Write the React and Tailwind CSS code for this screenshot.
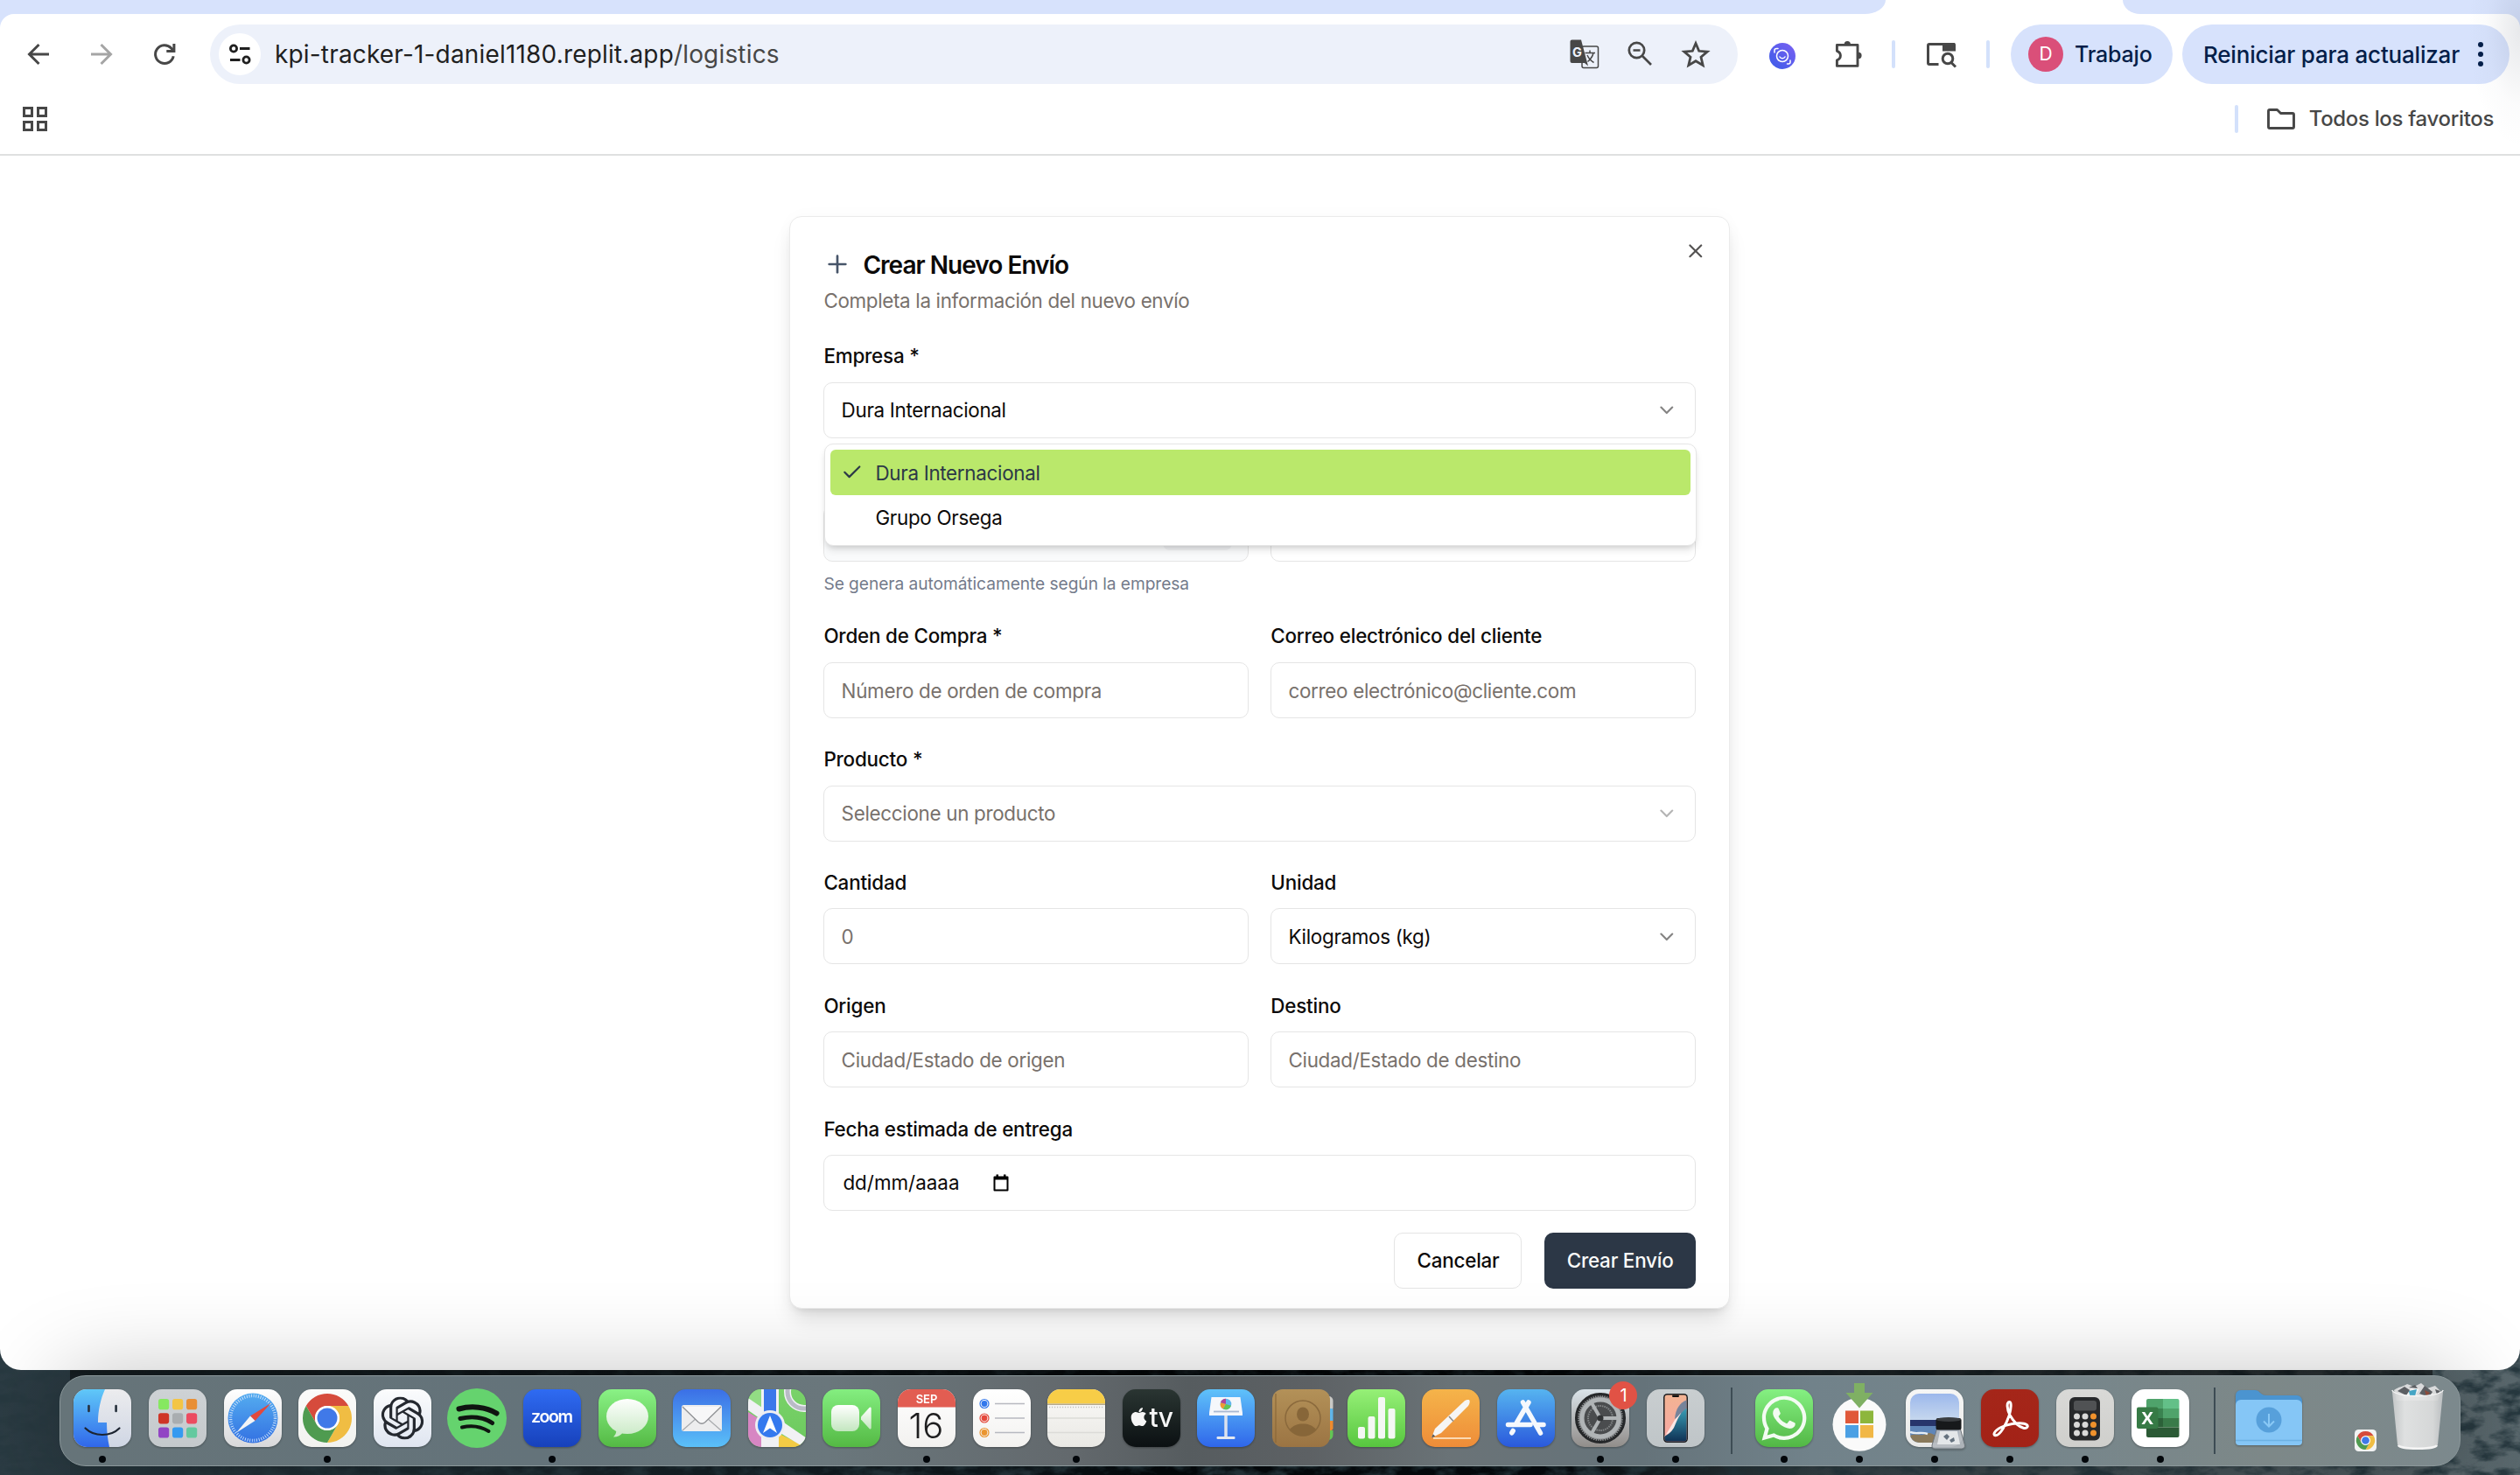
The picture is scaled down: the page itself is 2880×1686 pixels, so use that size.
import { ChevronDown, Check, Plus, X } from "lucide-react";
import { FaApple, FaWhatsapp } from "react-icons/fa";
import { SiOpenai } from "react-icons/si";

/* ---------- Browser chrome ---------- */

function TabStrip() {
  return (
    <div className="flex h-4 justify-between bg-white">
      <div className="w-[2155px] bg-[#d7e2fc] [border-bottom-right-radius:24px_16px]" />
      <div className="w-[454px] bg-[#d7e2fc] [border-bottom-left-radius:20px_16px]" />
    </div>
  );
}

const stroke = { fill: "none", stroke: "currentColor", strokeLinecap: "butt", strokeLinejoin: "miter" };

function ArrowLeft({ className }) {
  return (
    <svg viewBox="0 0 36 36" className={className} {...stroke} strokeWidth="3">
      <path d="M30 18H8M18.5 7 7.5 18l11 11" />
    </svg>
  );
}

function Reload({ className }) {
  return (
    <svg viewBox="0 0 36 36" className={className} {...stroke} strokeWidth="3">
      <path d="M28.2 20.2A10.4 10.4 0 1 1 25.6 11l3 3.2" />
      <path d="M28.9 6v8.6h-8.6" />
    </svg>
  );
}

function Tune() {
  return (
    <svg viewBox="0 0 28 28" className="size-7" {...stroke} strokeWidth="2.8">
      <circle cx="7" cy="7.5" r="3.6" />
      <path d="M14 7.5h11.5M3 20.5h11.5" />
      <circle cx="21.5" cy="20.5" r="3.6" />
    </svg>
  );
}

function Translate() {
  return (
    <svg viewBox="0 0 34 34" className="size-[34px]">
      <rect x="14" y="8" width="18.5" height="24.5" rx="2" fill="#edf1fa" stroke="#474747" strokeWidth="1.5" />
      <path d="M2.500.5H13L21 30.500 17 27H2.500a2 2 0 0 1-2-2V2.500a2 2 0 0 1 2-2z" fill="#474747" />
      <text x="3" y="20" fontSize="14.500" fontWeight="700" fill="#edf1fa" className="font-['Inter']">G</text>
      <path d="M17.500 15.500h11.500M23 12.500v3M27 15.500c-1 4.500-3.500 7.500-6.500 10M20 18c1.500 3.500 4 6.500 7.500 8.500" fill="none" stroke="#474747" strokeWidth="1.500" />
    </svg>
  );
}

function ZoomOut() {
  return (
    <svg viewBox="0 0 32 32" className="size-8 text-[#474747]" {...stroke} strokeWidth="2.700">
      <circle cx="12.500" cy="11.500" r="8.700" />
      <path d="m18.500 17.500 10.500 10.500M8.500 11.500h8" />
    </svg>
  );
}

function Star() {
  return (
    <svg viewBox="0 0 36 36" className="size-9 text-[#474747]" {...stroke} strokeWidth="2.800">
      <path d="m18 5.500 3.700 8.800 9.500.8-7.200 6.200 2.200 9.300L18 25.700l-8.200 4.900 2.200-9.300-7.200-6.200 9.500-.8z" />
    </svg>
  );
}

function FaceScan() {
  return (
    <svg viewBox="0 0 30 30" className="mt-1 size-[30px]">
      <defs>
        <linearGradient id="scan" x1="0" y1="1" x2="1" y2="0">
          <stop offset="0" stopColor="#3a5be8" />
          <stop offset="1" stopColor="#7b61f2" />
        </linearGradient>
      </defs>
      <circle cx="15" cy="15" r="15" fill="url(#scan)" />
      <g fill="none" stroke="#fff" strokeWidth="1.500" strokeLinecap="round">
        <circle cx="15" cy="15" r="6.500" />
        <path d="M12 16c1.200 2.200 4.800 2.200 6 0M6 11V8.500C6 7.500 7 6.500 8.500 6.500H10M24 20v2c0 1-1 2-2 2h-1.500" />
      </g>
    </svg>
  );
}

function Puzzle() {
  return (
    <svg viewBox="0 0 36 36" className="size-9 text-[#474747]" {...stroke} strokeWidth="2.900" strokeLinejoin="round">
      <path d="M5.400 7.400H29V31.400H5.400v-6.500c2.800-1 4-3 4-5.300s-1.200-4.300-4-5.300z" />
      <path d="M13.700 6.500a3.600 3.600 0 0 1 7.200 0zM30 15.800a3.600 3.600 0 0 1 0 7.200z" fill="currentColor" stroke="none" />
    </svg>
  );
}

function TabSearch() {
  return (
    <svg viewBox="0 0 36 32" className="h-8 w-9 text-[#474747]" {...stroke} strokeWidth="3">
      <path d="M14.500 27.500H4a1.500 1.500 0 0 1-1.500-1.500V6A1.500 1.500 0 0 1 4 4.500h29" />
      <path d="M19 3h13a2 2 0 0 1 2 2v7.500H19z" fill="currentColor" stroke="none" />
      <circle cx="25" cy="21" r="5.800" />
      <path d="m29 25.500 5 5" />
    </svg>
  );
}

function Divider({ className }) {
  return <div className={"h-8 w-1 rounded-full bg-[#d3e1fb] " + className} />;
}

function Toolbar() {
  return (
    <div className="flex h-[92px] items-start pt-3">
      <div className="flex h-[68px] w-[240px] items-center pl-[26px] text-[#474747]">
        <ArrowLeft className="size-9" />
        <ArrowLeft className="ml-9 size-9 rotate-180 text-[#a5a5a5]" />
        <Reload className="ml-9 size-9" />
      </div>
      <div className="flex h-[68px] w-[1746px] items-center rounded-full bg-[#edf1fa] pl-[10px]">
        <div className="flex size-12 items-center justify-center rounded-full bg-white text-[#1f1f1f]">
          <Tune />
        </div>
        <div className="ml-4 text-[28px] leading-9 tracking-[0.170px] whitespace-nowrap text-[#1f1f1f]">
          kpi-tracker-1-daniel1180.replit.app<span className="text-[#474747]">/logistics</span>
        </div>
        <div className="mr-[30px] ml-auto flex items-center">
          <Translate />
          <div className="ml-[30px]"><ZoomOut /></div>
          <div className="ml-[30px]"><Star /></div>
        </div>
      </div>
      <div className="flex h-[68px] flex-1 items-center pl-9">
        <FaceScan />
        <div className="ml-[42px]"><Puzzle /></div>
        <Divider className="ml-[32px]" />
        <div className="ml-[35px]"><TabSearch /></div>
        <Divider className="ml-[33px]" />
        <div className="ml-6 flex h-[68px] w-[185px] items-center rounded-full bg-[#d7e2fc] pl-5 text-[#041e49]">
          <div className="flex size-10 items-center justify-center rounded-full bg-[#da4f79] text-[21px] text-white">D</div>
          <span className="mt-px ml-[13px] text-[25px] font-medium tracking-[-0.200px]">Trabajo</span>
        </div>
        <div className="ml-[11px] flex h-[68px] w-[374px] items-center rounded-full bg-[#d7e2fc] pl-6 text-[#041e49]">
          <span className="text-[26px] font-medium tracking-[-0.200px] whitespace-nowrap">Reiniciar para actualizar</span>
          <div className="ml-[21px] flex flex-col gap-[5px]">
            <i className="size-[6px] rounded-full bg-current" />
            <i className="size-[6px] rounded-full bg-current" />
            <i className="size-[6px] rounded-full bg-current" />
          </div>
        </div>
      </div>
    </div>
  );
}

function BookmarksBar() {
  return (
    <div className="flex h-[70px] items-center border-b-2 border-[#dfe0e0] pr-[30px] pl-[26px] text-[#474747]">
      <div className="mb-3 grid grid-cols-2 gap-1">
        <i className="size-3 border-[3px] border-current" />
        <i className="size-3 border-[3px] border-current" />
        <i className="size-3 border-[3px] border-current" />
        <i className="size-3 border-[3px] border-current" />
      </div>
      <div className="mb-3 ml-auto flex items-center">
        <Divider className="mr-[32px]" />
        <svg viewBox="0 0 34 26" className="h-[26px] w-[34px]" fill="none" stroke="currentColor" strokeWidth="2.900" strokeLinejoin="round">
          <path d="M2.500 4a1.500 1.500 0 0 1 1.500-1.500h8.500l4 4H30A1.500 1.500 0 0 1 31.500 8v14A1.500 1.500 0 0 1 30 23.500H4A1.500 1.500 0 0 1 2.500 22z" />
        </svg>
        <span className="ml-[15px] text-[24px] font-medium tracking-[-0.330px] whitespace-nowrap">Todos los favoritos</span>
      </div>
    </div>
  );
}

/* ---------- Form dialog ---------- */

function Field({ label, children, className = "" }) {
  return (
    <div className={"flex flex-col pt-px " + className}>
      <label className="h-6 text-[22.400px] leading-6 font-medium tracking-[-0.190px] whitespace-nowrap">{label}</label>
      <div className="mt-[17.500px]">{children}</div>
    </div>
  );
}

function Box({ children, muted, faded, select }) {
  return (
    <div className="flex h-16 items-center justify-between rounded-[10px] border border-[#e5e5e5] pr-[19px] pl-[19.200px] text-[22.400px] tracking-[-0.300px]">
      <span className={muted ? "pt-px text-[#78716c]" : "pt-px text-[#0c0a09]"}>{children}</span>
      {select && <ChevronDown className={faded ? "size-[25.600px] opacity-30" : "size-[25.600px] opacity-50"} />}
    </div>
  );
}

function CalendarGlyph() {
  return (
    <svg viewBox="0 0 20 20" className="h-5 w-5">
      <path d="M2.500 3.500h15v15h-15z" fill="none" stroke="#000" strokeWidth="2" strokeLinejoin="round" />
      <path d="M2 3h16v3.500H2zM4.500.5h2.500v3H4.500zM13 .5h2.500v3H13z" fill="#000" />
    </svg>
  );
}

function Dropdown() {
  return (
    <div className="absolute top-[70px] left-[0.600px] z-10 h-[117px] w-[997.500px] rounded-[10px] border border-[#e5e5e5] bg-white p-[6.400px] text-[22.400px] tracking-[-0.300px] shadow-[0_6px_10px_-2px_rgba(0,0,0,0.13),0_3px_6px_-3px_rgba(0,0,0,0.12)]">
      <div className="flex h-[52px] items-center rounded-[6px] bg-[#bae86b] pl-[12px] text-[#2c3947]">
        <Check className="size-[25.600px]" />
        <span className="ml-[13.500px] pt-px">Dura Internacional</span>
      </div>
      <div className="flex h-[51px] items-center pl-[51.100px] text-[#0c0a09]">Grupo Orsega</div>
    </div>
  );
}

function Dialog() {
  return (
    <div className="relative h-[1249px] w-[1075px] rounded-[14px] border border-[#ebebeb] bg-white px-[38.400px] pt-[38px] text-[#0c0a09] shadow-[0_16px_24px_-5px_rgba(0,0,0,0.13),0_6px_10px_-6px_rgba(0,0,0,0.13),0_0_20px_rgba(0,0,0,0.025)]">
      <X className="absolute top-[26px] right-[25px] size-[25.600px] opacity-70" />
      <div className="h-[108.300px]">
        <div className="flex h-8 items-center">
          <Plus className="size-8 text-[#475569]" />
          <h2 className="mt-[2px] ml-[13px] text-[28px] leading-8 font-semibold tracking-[-0.970px]">Crear Nuevo Envío</h2>
        </div>
        <p className="mt-[14px] text-[22.400px] leading-6 tracking-[-0.330px] text-[#78716c]">Completa la información del nuevo envío</p>
      </div>
      <div className="flex flex-col gap-[34.300px]">
        <Field label="Empresa *">
          <div className="relative">
            <Box select>Dura Internacional</Box>
            <Dropdown />
          </div>
        </Field>
        <div className="grid h-[145px] grid-cols-2 gap-[25.600px]">
          <div>
            <div className="mt-[42.500px] flex h-16 items-end justify-end rounded-[10px] border border-[#e5e5e5] bg-[#f9fafb] pr-[18px] pb-3">
              <div className="h-9 w-[79px] rounded-[8px] bg-[#eff0f2]" />
            </div>
            <p className="mt-[13px] text-[19.200px] leading-6 tracking-[-0.070px] whitespace-nowrap text-[#747b8b]">
              Se genera automáticamente según la empresa
            </p>
          </div>
          <div className="mt-[42.500px] h-16 rounded-[10px] border border-[#e5e5e5]" />
        </div>
        <div className="grid grid-cols-2 gap-[25.600px]">
          <Field label="Orden de Compra *"><Box muted>Número de orden de compra</Box></Field>
          <Field label="Correo electrónico del cliente"><Box muted>correo electrónico@cliente.com</Box></Field>
        </div>
        <Field label="Producto *"><Box muted select faded>Seleccione un producto</Box></Field>
        <div className="grid grid-cols-2 gap-[25.600px]">
          <Field label="Cantidad"><Box muted>0</Box></Field>
          <Field label="Unidad"><Box select>Kilogramos (kg)</Box></Field>
        </div>
        <div className="grid grid-cols-2 gap-[25.600px]">
          <Field label="Origen"><Box muted>Ciudad/Estado de origen</Box></Field>
          <Field label="Destino"><Box muted>Ciudad/Estado de destino</Box></Field>
        </div>
        <Field label="Fecha estimada de entrega">
          <div className="flex h-16 items-center rounded-[10px] border border-[#e5e5e5] pl-[21px] text-[22.400px]">
            <span className="w-[171px]">dd/mm/aaaa</span>
            <CalendarGlyph />
          </div>
        </Field>
      </div>
      <div className="mt-[25px] flex justify-end gap-[25.600px] text-[22.400px] font-medium tracking-[-0.200px]">
        <button className="h-16 w-[146px] rounded-[10px] border border-[#e5e5e5] pl-px">Cancelar</button>
        <button className="h-16 w-[173px] rounded-[10px] bg-[#2c3746] pl-px text-[#fafaf9]">Crear Envío</button>
      </div>
    </div>
  );
}

/* ---------- Dock ---------- */

const R = 15;

function Grad({ id, from, to }) {
  return (
    <linearGradient id={id} x1="0" y1="0" x2="0" y2="1">
      <stop offset="0" stopColor={from} />
      <stop offset="1" stopColor={to} />
    </linearGradient>
  );
}

function Tile({ id, from, to, children }) {
  return (
    <svg viewBox="0 0 66 66" className="size-[66px] overflow-visible drop-shadow-[0_1px_1px_rgba(0,0,0,0.3)]">
      <defs>
        <Grad id={id} from={from} to={to} />
        <clipPath id={id + "-clip"}><rect width="66" height="66" rx={R} /></clipPath>
      </defs>
      <rect width="66" height="66" rx={R} fill={`url(#${id})`} />
      {children}
    </svg>
  );
}

function Finder() {
  return (
    <Tile id="finder" from="#ececee" to="#cfd6e4">
      <defs><Grad id="finder-b" from="#60c8f8" to="#3067ea" /></defs>
      <path clipPath="url(#finder-clip)" d="M0 0h36c-5 11-8 24-8 38h10c0 10 1 19 3 28H0z" fill="url(#finder-b)" />
      <path d="M17.500 19v6M48.600 19v6" stroke="#26303c" strokeWidth="2.600" strokeLinecap="round" />
      <path d="M13.500 44.500c10 10 29 10 39 0" fill="none" stroke="#1c2430" strokeWidth="2.200" strokeLinecap="round" />
    </Tile>
  );
}

const launchColors = ["#86e860", "#f3c545", "#e88f35", "#cf3527", "#a9adb0", "#ec4b60", "#9245c4", "#359af0", "#63c99f"];

function Launchpad() {
  return (
    <Tile id="launch" from="#ced2d5" to="#c4c9cc">
      {launchColors.map((c, i) => (
        <rect key={c} x={11 + (i % 3) * 16} y={11 + Math.floor(i / 3) * 16.200} width="12.200" height="12.200" rx="2.800" fill={c} />
      ))}
    </Tile>
  );
}

function Safari() {
  return (
    <Tile id="safari" from="#ffffff" to="#d8d8da">
      <defs><Grad id="safari-b" from="#54acf0" to="#3371e2" /></defs>
      <circle cx="33" cy="33" r="28.500" fill="url(#safari-b)" />
      <circle cx="33" cy="33" r="25.500" fill="none" stroke="#cfe4fb" strokeWidth="3.600" strokeDasharray=".9 1.770" />
      <path d="M53.500 16 35.500 36 30 30.500z" fill="#e2483c" />
      <path d="M14 49.700 30 30.500l5.500 5.500z" fill="#f3f4f6" />
    </Tile>
  );
}

function ChromeMark() {
  const seg = "M8.750 19A28 28 0 0 1 57.250 19H33A14 14 0 0 0 20.900 40z";
  return (
    <g>
      <path d={seg} fill="#d64b3c" />
      <path d={seg} fill="#f0bd43" transform="rotate(120 33 33)" />
      <path d={seg} fill="#4f9b50" transform="rotate(240 33 33)" />
      <circle cx="33" cy="33" r="14" fill="#fff" />
      <circle cx="33" cy="33" r="11.500" fill="#4079e8" />
    </g>
  );
}

function Chrome() {
  return <Tile id="chrome" from="#fbfbfa" to="#f1f2ef"><ChromeMark /></Tile>;
}

function ChatGPT() {
  return <Tile id="gpt" from="#fbfcfd" to="#dfe5f0"><SiOpenai x="8.500" y="8.500" size={49} color="#24282f" /></Tile>;
}

function Spotify() {
  return (
    <svg viewBox="0 0 68 68" className="size-[68px]">
      <circle cx="34" cy="34" r="34" fill="#65d36e" />
      <g fill="none" stroke="#0f1410" strokeLinecap="round">
        <path d="M13.500 23.500c14-4 31-2.500 43 5" strokeWidth="6" />
        <path d="M15 34.500c12-3 26-2 36.500 5" strokeWidth="5" />
        <path d="M17 44.500c10-2.500 21-1.500 30.500 4.500" strokeWidth="4" />
      </g>
    </svg>
  );
}

function Zoom() {
  return (
    <Tile id="zoom" from="#2f6bf2" to="#1741bb">
      <text x="32.500" y="38" textAnchor="middle" fontSize="19.500" fontWeight="600" letterSpacing="-1.300" fill="#fff" className="font-['Inter']">zoom</text>
    </Tile>
  );
}

function Messages() {
  return (
    <Tile id="msg" from="#8af286" to="#54b944">
      <defs><Grad id="msg-b" from="#fdfffd" to="#cdebc9" /></defs>
      <path d="M20 45c1 4-.5 7-3 9.500 5 0 8.500-2 11-5z" fill="#cdebc9" />
      <ellipse cx="33" cy="31" rx="24" ry="20" fill="url(#msg-b)" />
    </Tile>
  );
}

function Mail() {
  return (
    <Tile id="mail" from="#3b6fe6" to="#5bc0f8">
      <rect x="10" y="18" width="46" height="30" rx="2.500" fill="#ededee" />
      <path d="M11 47 27 33M55 47 39 33" stroke="#a9abae" strokeWidth="1.200" />
      <path d="m11 20 18 17.500c2.500 2.200 5.500 2.200 8 0L55 20" fill="#f7f7f8" stroke="#8f9194" strokeWidth="1.300" />
    </Tile>
  );
}

function Maps() {
  return (
    <Tile id="maps" from="#79d269" to="#6cc95e">
      <g clipPath="url(#maps-clip)">
        <path d="M0 0h16v24L0 10z" fill="#93dd84" />
        <path d="M0 26 16 36v30H0z" fill="#d786c3" />
        <path d="M34 50 66 66H34z" fill="#f3cb45" />
        <path d="M0 10 70 58v12L40 52 0 24z" fill="#f1f1f4" />
        <path d="M15 0h20v66H15z" fill="#f1f1f4" />
        <path d="M18 0h14v34H18z" fill="#3b78ea" />
        <circle cx="64" cy="3" r="19" fill="none" stroke="#f0f0f4" strokeWidth="8" />
        <circle cx="64" cy="3" r="19" fill="none" stroke="#b9bbc6" strokeWidth="5" />
        <path d="M36 52l22 14H36z" fill="#f3cb45" />
      </g>
      <circle cx="25" cy="41" r="17" fill="#ededf2" />
      <circle cx="25" cy="41" r="14" fill="#3579ee" />
      <path d="m25 30 8 20-8-5.500-8 5.500z" fill="#fff" />
    </Tile>
  );
}

function FaceTime() {
  return (
    <Tile id="ft" from="#84ee80" to="#54b944">
      <defs><Grad id="ft-b" from="#ffffff" to="#c3e6bf" /></defs>
      <rect x="10" y="18" width="32" height="30" rx="8" fill="url(#ft-b)" />
      <path d="M44 31.500 53.500 21c1-1 2.200-.5 2.200 1v22c0 1.500-1.200 2-2.200 1L44 34.500z" fill="url(#ft-b)" />
    </Tile>
  );
}

function Calendar() {
  return (
    <Tile id="cal" from="#ffffff" to="#f2f1ef">
      <path clipPath="url(#cal-clip)" d="M0 0h66v20.500H0z" fill="#e25d52" />
      <text x="33" y="16" textAnchor="middle" fontSize="13" fontWeight="600" fill="#fff" className="font-['Inter']">SEP</text>
      <text x="32.500" y="55.500" textAnchor="middle" fontSize="40" fontWeight="300" fill="#1e1e1f" className="font-['Inter']">16</text>
    </Tile>
  );
}

function Reminders() {
  return (
    <Tile id="rem" from="#ffffff" to="#f3f2f0">
      {["#3278ec", "#e4483b", "#ea9530"].map((c, i) => (
        <g key={c}>
          <circle cx="13" cy={16.500 + i * 16.500} r="5" fill="none" stroke={c} strokeWidth="1.200" />
          <circle cx="13" cy={16.500 + i * 16.500} r="3.400" fill={c} />
          <path d={`M25 ${16.500 + i * 16.500}h34`} stroke="#b7b9c0" strokeWidth="1.500" />
        </g>
      ))}
    </Tile>
  );
}

function Notes() {
  return (
    <Tile id="notes" from="#fbfaf8" to="#e9e8e4">
      <path clipPath="url(#notes-clip)" d="M0 0h66v16.500H0z" fill="#f7cd47" />
      <path d="M0 17.300h66" stroke="#b5a98c" strokeWidth="1.500" />
      <path d="M2 20.500h62" stroke="#c4c2bc" strokeWidth="1.500" strokeDasharray="1.200 1.800" />
      <path d="M0 33h66M0 49.500h66" stroke="#dcdbd8" strokeWidth="1.500" />
    </Tile>
  );
}

function AppleTV() {
  return (
    <Tile id="tv" from="#2a3532" to="#0b1012">
      <FaApple x="6.500" y="19.500" size={24} color="#f6f6f6" />
      <text x="30.500" y="43" fontSize="30" fontWeight="500" letterSpacing="-.5" fill="#f6f6f6" className="font-['Inter']">tv</text>
    </Tile>
  );
}

function Keynote() {
  return (
    <Tile id="key" from="#5fc2fa" to="#2f66ea">
      <path d="M33 29v26" stroke="#dbe2ee" strokeWidth="3.500" />
      <rect x="22.500" y="54" width="21" height="3" rx="1.200" fill="#e3e8f0" />
      <path d="M16.500 9h33l2.500 18v3H14v-3z" fill="#f5f7fb" />
      <path d="M19 25.500h29" stroke="#a9b8d2" strokeWidth="1.800" />
      <circle cx="33" cy="17" r="6.300" fill="#61b6ec" />
      <path d="M33 17V10.700a6.300 6.300 0 0 0-6 4.500z" fill="#b0459b" />
      <path d="m33 17-6-1.800a6.300 6.300 0 0 0 3 7.400z" fill="#ef9b35" />
      <path d="m33 17-3 5.600a6.300 6.300 0 0 0 9-3.800z" fill="#62c554" />
    </Tile>
  );
}

function Contacts() {
  return (
    <svg viewBox="0 0 70 66" className="-mr-1 h-[66px] w-[70px]">
      <defs><Grad id="book" from="#b39158" to="#9b7443" /></defs>
      <rect x="50" y="8" width="19.500" height="18" rx="5" fill="#c9c9c6" />
      <path d="M60 22h8a1.500 1.500 0 0 1 1.500 1.500V36H60z" fill="#5fb5ea" />
      <path d="M60 36h9.500v9a3 3 0 0 1-2 2H60z" fill="#ef8b2e" />
      <path d="M60 47h9.500v5a6 6 0 0 1-5 6H60z" fill="#63c554" />
      <rect width="66" height="66" rx="12" fill="url(#book)" />
      <path d="M4 5v56" stroke="#8a683a" strokeWidth="1.200" />
      <circle cx="35" cy="33" r="20" fill="none" stroke="#8a693c" strokeWidth="1.500" />
      <ellipse cx="35" cy="28.500" rx="7" ry="8" fill="#876639" />
      <path d="M20 46c4-5 9-6.500 15-6.500S46 41 50 46c-4 5-9 7.500-15 7.500S24 51 20 46z" fill="#876639" />
    </svg>
  );
}

function Numbers() {
  return (
    <Tile id="num" from="#96f077" to="#57c63f">
      {[[12, 43], [23.500, 31], [35, 9], [46.500, 22]].map(([x, y]) => (
        <rect key={x} x={x} y={y} width="8" height={56.500 - y} rx="2" fill="#f4f7f3" />
      ))}
    </Tile>
  );
}

function Pages() {
  return (
    <Tile id="pages" from="#f5b44a" to="#ee8c38">
      <path d="M13 56h43" stroke="#fbd9b2" strokeWidth="2" />
      <path d="M11 55.500 15 45 48 14c2-2 5.500-2.500 6.300-1.500s.5 4-1.300 6.500L22 50z" fill="#f6f5f4" />
      <path d="m31 31 5 5.500" stroke="#8c8a88" strokeWidth="1.600" />
      <path d="m11 55.500 1.700-4.200 2.500 2.500z" fill="#555" />
    </Tile>
  );
}

function AppStore() {
  return (
    <Tile id="store" from="#56b4f0" to="#2a59dc">
      <g stroke="#f5f8fd" strokeWidth="5.500" strokeLinecap="round">
        <path d="M36 15 22.500 38M12.500 40.500H38M46.500 40.500h6.500M29.500 15l20 35M18.200 47.500l-1.400 2.300" />
      </g>
    </Tile>
  );
}

function Settings() {
  return (
    <div className="relative">
      <Tile id="set" from="#dbe4ea" to="#918d8a">
        <circle cx="33" cy="33" r="27.500" fill="#8f9294" stroke="#26282a" strokeWidth="3" />
        <circle cx="33" cy="33" r="26.500" fill="none" stroke="#26282a" strokeWidth="4" strokeDasharray="1.400 1.370" />
        <circle cx="33" cy="33" r="21" fill="#4a4c4e" stroke="#b0b4b6" strokeWidth="5" />
        <circle cx="33" cy="33" r="14" fill="none" stroke="#838688" strokeWidth="2" strokeDasharray="1.500 1" />
        <path d="M33 33h21M33 33 22.500 14.800M33 33 22.500 51.200" stroke="#b0b4b6" strokeWidth="4" />
        <circle cx="33" cy="33" r="3.500" fill="#303234" />
      </Tile>
      <div className="absolute -top-[9px] -right-[9px] flex size-8 items-center justify-center rounded-full bg-[#e15245] text-[20px] text-white">1</div>
    </div>
  );
}

function Phone() {
  return (
    <Tile id="mirror" from="#c9ced0" to="#bfc5c8">
      <defs>
        <clipPath id="scr"><rect x="20.500" y="6.500" width="25" height="53" rx="3" /></clipPath>
        <Grad id="scr-a" from="#f3b392" to="#f7a7a5" />
        <Grad id="scr-b" from="#3aa1b8" to="#0d2b4f" />
      </defs>
      <rect x="19" y="5" width="28" height="56" rx="4.500" fill="#1d1f22" />
      <g clipPath="url(#scr)">
        <path d="M20 6h27v54H20z" fill="url(#scr-a)" />
        <path d="M47 12c-9 3-14 10-15 22l15-10z" fill="#76839a" />
        <path d="M20 53c10-4 17-12 19-26l-7 8-12 20z" fill="#fbe6e4" />
        <path d="M47 21c-9 5-12 14-16 23-3 5-7 8-11 10v8h27z" fill="url(#scr-b)" />
      </g>
      <rect x="29" y="6.500" width="8" height="2.500" rx="1.200" fill="#111" />
    </Tile>
  );
}

function WhatsApp() {
  return <Tile id="wa" from="#85f082" to="#52b745"><FaWhatsapp x="4" y="4" size={58} color="#f3fbf2" /></Tile>;
}

function MsUpdate() {
  return (
    <svg viewBox="0 0 66 66" className="size-[66px] overflow-visible">
      <circle cx="33" cy="40.200" r="30.500" fill="#fafafa" />
      <path d="M17 24.500h15V39H17z" fill="#e0593a" />
      <path d="M34 24.500h15V39H34z" fill="#8db63c" />
      <path d="M17 41h15v14.500H17z" fill="#4ba0e4" />
      <path d="M34 41h15v14.500H34z" fill="#f1b746" />
      <path d="M27-7h12V4h9.500L33 21.500 17.500 4H27z" fill="#7fb063" />
    </svg>
  );
}

function Preview() {
  return (
    <Tile id="prev" from="#f6f6f5" to="#e9e9e8">
      <defs>
        <Grad id="sky" from="#9cb8ec" to="#c7d8ee" />
        <clipPath id="photo"><rect x="5" y="5" width="56" height="56" rx="10" /></clipPath>
      </defs>
      <g clipPath="url(#photo)">
        <path d="M5 5h56v31H5z" fill="url(#sky)" />
        <path d="M5 35h56v8H5z" fill="#27356b" />
        <path d="M5 42h56v20H5z" fill="#5f86b8" />
        <path d="M5 53c7-3 12 1 18-2s8 2 14 2v9H5z" fill="#8a7a5c" />
        <path d="M5 49c8 3 12-1 20 2" fill="none" stroke="#e5edf5" strokeWidth="2.500" />
      </g>
      <path d="M36 44h26l5.500 20c.5 3-2 4-4 4H34c-2 0-4.500-1-4-4z" fill="#b4babf" fillOpacity=".92" stroke="#6f767c" strokeWidth="1" />
      <path d="M39 48h20l3 15H36z" fill="#e4e7e9" />
      <path d="m43 54 4-3 3 3-3 4zM50 58l5-3 1 4-4 2z" fill="#66737f" />
      <rect x="34.500" y="33" width="29" height="13.500" rx="2.500" fill="#17191b" />
      <ellipse cx="49" cy="34.500" rx="14" ry="2.500" fill="#3a3d40" />
    </Tile>
  );
}

function Acrobat() {
  return (
    <Tile id="pdf" from="#a52619" to="#a32217">
      <path
        d="M32.500 14.500c-3.500 0-3 8 .5 15 4 7 9 13 15.500 14.700 5.500 1.300 7-4 .5-5-7.500-1.200-19 .8-26 4.300-8.500 4.200-9.500 9-6.500 9.300 5 .3 12.500-12.800 15.800-23 2.200-8 2.700-15.300.2-15.300z"
        fill="none" stroke="#fff" strokeWidth="3"
      />
    </Tile>
  );
}

function Calculator() {
  return (
    <Tile id="calc" from="#d9d9d7" to="#cfcfcc">
      <rect x="15" y="9" width="35" height="49.500" rx="6" fill="#27292b" />
      <rect x="20" y="13" width="26" height="11.500" rx="3" fill="#505254" />
      {[31, 40.500, 50].map((y) => (
        <g key={y}>
          <circle cx="23.500" cy={y} r="3.500" fill="#d9d9d8" />
          <circle cx="33" cy={y} r="3.500" fill="#d9d9d8" />
          <circle cx="42.500" cy={y} r="3.500" fill="#f0922c" />
        </g>
      ))}
    </Tile>
  );
}

function Excel() {
  return (
    <Tile id="xls" from="#ffffff" to="#ffffff">
      <path d="M19 11h17v11H17v-9a2 2 0 0 1 2-2z" fill="#4fa36b" />
      <path d="M36 11h16.500a2 2 0 0 1 2 2v9H36z" fill="#63c088" />
      <path d="M17 22h19v11H17z" fill="#3a8350" />
      <path d="M36 22h18.500v11H36z" fill="#4fa36b" />
      <path d="M17 33h19v10.500H17z" fill="#2c6139" />
      <path d="M36 33h18.500v10.500H36z" fill="#397b49" />
      <path d="M17 43.500h37.500V53a2 2 0 0 1-2 2H19a2 2 0 0 1-2-2z" fill="#2b5a35" />
      <rect x="6" y="20.500" width="24.500" height="24.500" rx="2" fill="#367a45" />
      <text x="18.200" y="40" textAnchor="middle" fontSize="20" fontWeight="700" fill="#fff" className="font-['Open_Sans']">X</text>
    </Tile>
  );
}

function Folder() {
  return (
    <svg viewBox="0 0 76 66" className="h-[66px] w-[76px] drop-shadow-[0_1px_1px_rgba(0,0,0,0.3)]">
      <path d="M0 8a6 6 0 0 1 6-6h16c3 0 4 1 6 3s4 3 7 3h35a6 6 0 0 1 6 6v30H0z" fill="#4b94d0" />
      <path d="M0 19a6 6 0 0 1 6-6h64a6 6 0 0 1 6 6v42a4 4 0 0 1-4 4H4a4 4 0 0 1-4-4z" fill="#85c6f6" />
      <path d="M0 59.500h76" stroke="#6db1e4" strokeWidth="1.300" />
      <circle cx="38" cy="36" r="14.500" fill="#57a0db" />
      <path d="M38 29v14M32 37.500l6 6 6-6" fill="none" stroke="#8ac9f6" strokeWidth="2" />
    </svg>
  );
}

function MiniChrome() {
  return (
    <svg viewBox="0 0 66 66" className="mb-[12px] size-[25px] self-end">
      <rect width="66" height="66" rx="12" fill="#f2f3f3" />
      <ChromeMark />
    </svg>
  );
}

function Trash() {
  return (
    <svg viewBox="0 0 60 78" className="mb-[4px] h-[78px] w-[60px]">
      <defs>
        <linearGradient id="bin" x1="0" y1="0" x2="1" y2="0">
          <stop offset="0" stopColor="#c9cbcc" />
          <stop offset=".25" stopColor="#e6e7e7" />
          <stop offset=".8" stopColor="#dcdddd" />
          <stop offset="1" stopColor="#bfc2c4" />
        </linearGradient>
      </defs>
      <path d="M3 9C8 5 14 5 18 2l8 3 8-4 7 6 9-3 7 7-4 10H6z" fill="#d9dadb" />
      <path d="m24 5 8 3-4 6 10 3 6-6 6 5-20 5-16-4z" fill="#f1f1f1" />
      <path d="m7 10 8-5 6 4-4 6zM32 13l6-9 9 7-4 6zM20 6l7-3 3 4zM50 8l6 2-4 4z" fill="#5c5f63" />
      <path d="m20 10 9-2-2 8-6-1z" fill="#45a5c4" />
      <path d="m38 9 6 3-4 4z" fill="#8c4a3a" />
      <path d="M.8 9c3 9 55.400 9 58.400 0L53 71c-.6 7-45 7-46 0z" fill="url(#bin)" fillOpacity=".93" />
      <path d="M.8 9c4 9 54 9 58.400 0" fill="none" stroke="#f5f5f5" strokeWidth="1.300" />
      <path d="M8 72c2 5 42 5 44 0" fill="none" stroke="#f4f4f4" strokeWidth="2.500" />
    </svg>
  );
}

const mainApps = [
  [Finder, true], [Launchpad], [Safari], [Chrome, true], [ChatGPT], [Spotify], [Zoom, true], [Messages], [Mail], [Maps],
  [FaceTime], [Calendar, true], [Reminders], [Notes, true], [AppleTV], [Keynote], [Contacts], [Numbers], [Pages],
  [AppStore], [Settings, true], [Phone, true],
];
const recentApps = [[WhatsApp, true], [MsUpdate, true], [Preview, true], [Acrobat, true], [Calculator, true], [Excel, true]];

function Slot({ app: Icon, running, className }) {
  return (
    <div className={"flex h-full shrink-0 flex-col items-center " + className}>
      <div className="mt-[13px] flex h-[70px] items-center justify-center"><Icon /></div>
      {running && <i className="mt-[8px] size-2 rounded-full bg-[#02060a]" />}
    </div>
  );
}

function Separator({ className }) {
  return <div className={"mt-[13px] h-[76px] w-[2px] bg-[#3d4c54] " + className} />;
}

function Dock() {
  return (
    <div className="relative mt-[6px] ml-[68px] flex h-[104px] w-[2744px] rounded-[30px] border-[1.500px] border-[#8b979a] bg-[linear-gradient(90deg,#667479_0%,#64737a_20%,#6a777c_32%,#63696d_42%,#565c5f_47%,#5d6164_52%,#6a7377_58%,#65737a_66%,#71828a_73%,#77868b_84%,#7d8888_92%,#7c898d_100%)] pl-[5.500px] shadow-[0_0_100px_rgba(0,0,0,0.25)]">
      {mainApps.map(([A, on], i) => <Slot key={i} app={A} running={on} className="w-[85.620px]" />)}
      <Separator className="mr-[16px] ml-[20px]" />
      {recentApps.map(([A, on], i) => <Slot key={i} app={A} running={on} className="w-[86px]" />)}
      <Separator className="mr-[23px] ml-[18px]" />
      <div className="flex h-[89px] items-center pt-1"><Folder /></div>
      <div className="ml-[60px] flex h-[98px]"><MiniChrome /></div>
      <div className="ml-[17px] flex h-[96px] items-center"><Trash /></div>
    </div>
  );
}

function Wallpaper() {
  return (
    <svg className="absolute inset-x-0 bottom-0 h-[150px] w-full" viewBox="0 0 2880 150">
      <defs>
        <linearGradient id="wall" x1="0" y1="0" x2="1" y2="0">
          <stop offset="0" stopColor="#2c3c44" />
          <stop offset=".12" stopColor="#202e35" />
          <stop offset=".4" stopColor="#0f191e" />
          <stop offset=".46" stopColor="#04090c" />
          <stop offset=".62" stopColor="#060c10" />
          <stop offset=".72" stopColor="#364449" />
          <stop offset="1" stopColor="#5a686d" />
        </linearGradient>
        <linearGradient id="wall-shade" x1="0" y1="0" x2="0" y2="1">
          <stop offset=".15" stopColor="#000" stopOpacity=".6" />
          <stop offset=".35" stopColor="#000" stopOpacity=".3" />
          <stop offset="1" stopColor="#000" stopOpacity=".05" />
        </linearGradient>
        <filter id="stone" x="0" y="0" width="1" height="1">
          <feTurbulence type="fractalNoise" baseFrequency=".035 .07" numOctaves="4" seed="8" />
          <feColorMatrix values="0 0 0 0 0.02  0 0 0 0 0.04  0 0 0 0 0.05  3 0 0 0 -1.200" />
        </filter>
      </defs>
      <rect width="2880" height="150" fill="url(#wall)" />
      <rect width="2880" height="150" filter="url(#stone)" />
      <rect x="80" width="2700" height="150" fill="url(#wall-shade)" />
    </svg>
  );
}

export default function App() {
  return (
    <div className="relative h-[1686px] w-[2880px] overflow-hidden bg-[#10191e] font-['Inter',sans-serif] antialiased">
      <Wallpaper />
      <div className="relative flex h-[1566px] flex-col overflow-hidden rounded-b-[24px] bg-white">
        <TabStrip />
        <div className="bg-[#d7e2fc]">
          <div className="rounded-t-[16px] bg-white">
            <Toolbar />
            <BookmarksBar />
          </div>
        </div>
        <main className="flex flex-1 justify-center pt-[69px] pr-[1px]">
          <Dialog />
        </main>
        <div className="pointer-events-none absolute top-0 right-0 h-[170px] w-[60px] bg-[radial-gradient(ellipse_at_100%_20%,rgba(60,70,90,0.12),rgba(60,70,90,0.02)_45%,transparent_70%)]" />
      </div>
      <Dock />
    </div>
  );
}
